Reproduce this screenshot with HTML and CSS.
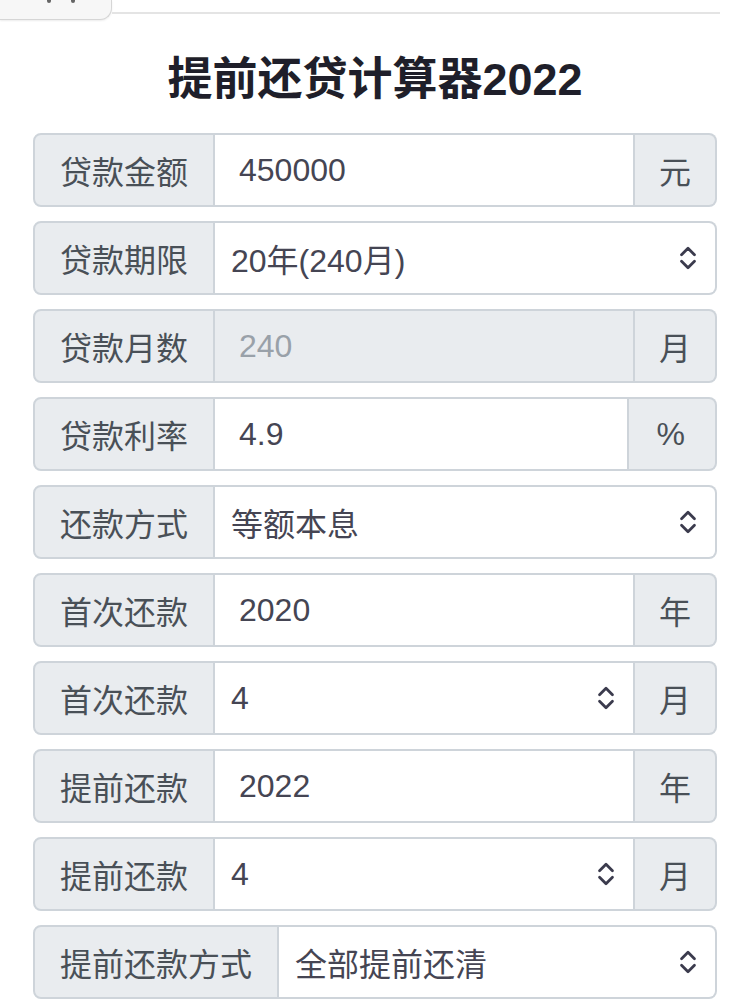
FILE: index.html
```html
<!DOCTYPE html>
<html lang="zh">
<head>
<meta charset="utf-8">
<title>提前还贷计算器2022</title>
<link rel="stylesheet" href="styles.css">
</head>
<body>
<div class="topbar">
  <div class="tab"><span class="dot"></span><span class="dot"></span></div>
  <div class="rule"></div>
</div>
<h1 class="title">提前还贷计算器2022</h1>
<div class="form">
  <div class="group">
    <span class="addon addon-first">贷款金额</span>
    <span class="field">450000</span>
    <span class="addon addon-last">元</span>
  </div>
  <div class="group">
    <span class="addon addon-first">贷款期限</span>
    <span class="field select field-last">20年(240月)<svg class="chev" viewBox="0 0 16 26"><path d="M2 10 L8 4 L14 10 M2 16 L8 22 L14 16"/></svg></span>
  </div>
  <div class="group">
    <span class="addon addon-first">贷款月数</span>
    <span class="field disabled">240</span>
    <span class="addon addon-last">月</span>
  </div>
  <div class="group">
    <span class="addon addon-first">贷款利率</span>
    <span class="field">4.9</span>
    <span class="addon addon-last addon-pct">%</span>
  </div>
  <div class="group">
    <span class="addon addon-first">还款方式</span>
    <span class="field select field-last">等额本息<svg class="chev" viewBox="0 0 16 26"><path d="M2 10 L8 4 L14 10 M2 16 L8 22 L14 16"/></svg></span>
  </div>
  <div class="group">
    <span class="addon addon-first">首次还款</span>
    <span class="field">2020</span>
    <span class="addon addon-last">年</span>
  </div>
  <div class="group">
    <span class="addon addon-first">首次还款</span>
    <span class="field select">4<svg class="chev" viewBox="0 0 16 26"><path d="M2 10 L8 4 L14 10 M2 16 L8 22 L14 16"/></svg></span>
    <span class="addon addon-last">月</span>
  </div>
  <div class="group">
    <span class="addon addon-first">提前还款</span>
    <span class="field">2022</span>
    <span class="addon addon-last">年</span>
  </div>
  <div class="group">
    <span class="addon addon-first">提前还款</span>
    <span class="field select">4<svg class="chev" viewBox="0 0 16 26"><path d="M2 10 L8 4 L14 10 M2 16 L8 22 L14 16"/></svg></span>
    <span class="addon addon-last">月</span>
  </div>
  <div class="group">
    <span class="addon addon-first">提前还款方式</span>
    <span class="field select field-last">全部提前还清<svg class="chev" viewBox="0 0 16 26"><path d="M2 10 L8 4 L14 10 M2 16 L8 22 L14 16"/></svg></span>
  </div>
</div>
</body>
</html>
```
FILE: styles.css
```css
html, body {
  margin: 0;
  padding: 0;
  background: #ffffff;
}
body {
  font-family: "Liberation Sans", "Noto Sans CJK SC", sans-serif;
  color: #495057;
}
.topbar {
  display: flex;
  align-items: flex-start;
  height: 22px;
  overflow: hidden;
}
.tab {
  width: 112px;
  height: 20px;
  flex: none;
  background: #f7f7f7;
  border: 1.5px solid #d6d6d6;
  border-top: none;
  border-left: none;
  border-radius: 0 0 12px 0;
  box-shadow: 0 1px 2px rgba(0, 0, 0, 0.08);
  display: flex;
  justify-content: center;
  gap: 20px;
  padding-left: 10px;
  box-sizing: border-box;
}
.dot {
  width: 4px;
  height: 3px;
  background: #666;
  border-radius: 0 0 2px 2px;
}
.rule {
  flex: 1;
  margin-top: 12px;
  margin-right: 30px;
  border-top: 2px solid #e4e4e4;
}
.title {
  margin: 28px 0 23px;
  text-align: center;
  font-size: 45px;
  line-height: 60px;
  font-weight: 700;
  color: #1f1f2a;
  letter-spacing: 0;
}
.form {
  margin: 0 33px;
}
.group {
  display: flex;
  height: 74px;
  margin-bottom: 14px;
  font-size: 32px;
}
.addon {
  display: flex;
  align-items: center;
  flex: none;
  padding: 0 25px;
  background: #e9ecef;
  border: 2px solid #ced4da;
  color: #495057;
  box-sizing: border-box;
}
.addon-first {
  border-radius: 8px 0 0 8px;
}
.addon-last {
  border-radius: 0 8px 8px 0;
  border-left: none;
  padding: 0 24px;
}
.addon-pct {
  padding: 0 30px 0 28px;
}
.field {
  flex: 1;
  display: flex;
  align-items: center;
  padding-left: 24px;
  border: 2px solid #ced4da;
  border-left: none;
  background: #ffffff;
  color: #454553;
  box-sizing: border-box;
}
.field.disabled {
  background: #e9ecef;
  color: #99a1a9;
}
.field.select {
  padding-left: 16px;
  justify-content: space-between;
  padding-right: 18px;
}
.field-last {
  border-radius: 0 8px 8px 0;
}
.chev {
  width: 18px;
  height: 28px;
  fill: none;
  stroke: #3b3b4d;
  stroke-width: 2.6;
  stroke-linecap: round;
  stroke-linejoin: round;
}
```
